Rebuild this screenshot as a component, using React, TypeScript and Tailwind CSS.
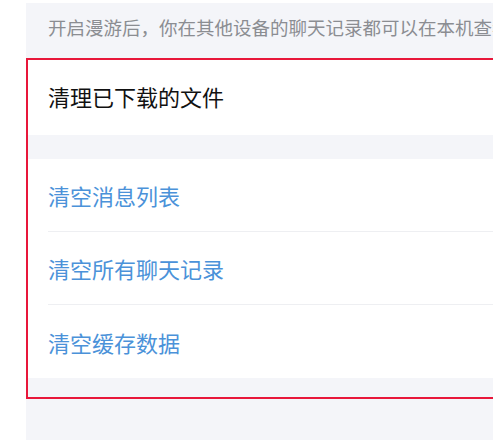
import React from 'react';

// 聊天记录设置 - 清理区域

const font = { fontFamily: '"Noto Sans CJK SC", "Noto Sans", sans-serif' };

function ActionRow({ label, last }: { label: string; last?: boolean }) {
  return (
    <div className="pl-[20px] bg-white">
      <div
        className={`h-[73px] flex items-center ${last ? '' : 'border-b border-[#eeeff2]'}`}
      >
        <span className="text-[22px] text-[#4b92d9] whitespace-nowrap leading-none">{label}</span>
      </div>
    </div>
  );
}

export default function App() {
  return (
    <div className="w-[493px] h-[440px] bg-white overflow-hidden pl-[26px] pt-[3px]" style={font}>
      <div className="w-[520px] h-full bg-[#f4f5f9] flex flex-col">
        {/* 漫游提示 */}
        <div className="h-[55px] flex items-center pl-[22px] pb-[7px]">
          <p className="text-[18.5px] text-[#8b8d92] whitespace-nowrap leading-none">
            开启漫游后，你在其他设备的聊天记录都可以在本机查看
          </p>
        </div>

        {/* 清理区域 */}
        <div className="border-2 border-[#e8173a] flex flex-col">
          <div className="h-[75px] bg-white flex items-center pl-[20px] pb-[3px]">
            <span className="text-[22px] text-[#111111] whitespace-nowrap leading-none">清理已下载的文件</span>
          </div>
          <div className="h-[24px]" />
          <ActionRow label="清空消息列表" />
          <ActionRow label="清空所有聊天记录" />
          <ActionRow label="清空缓存数据" last />
          <div className="h-[19px]" />
        </div>
      </div>
    </div>
  );
}
